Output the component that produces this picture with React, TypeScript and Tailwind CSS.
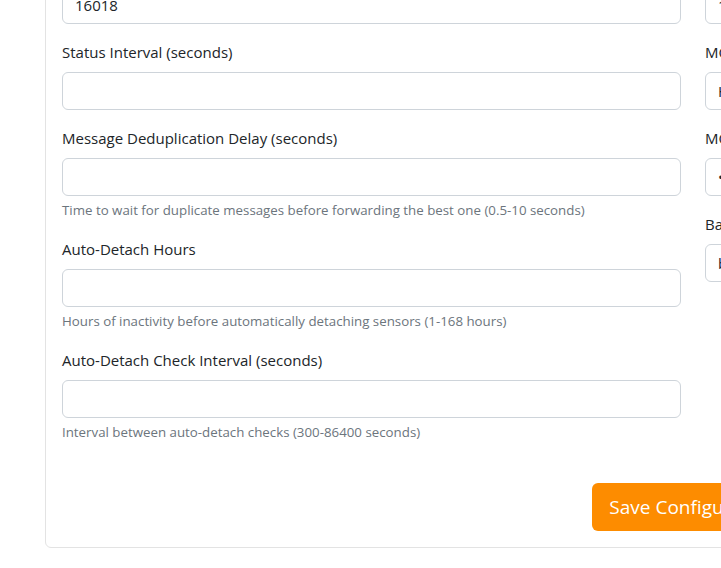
const left = [
  { label: "UDP Port", value: "16018" },
  { label: "Status Interval (seconds)", value: "" },
  {
    label: "Message Deduplication Delay (seconds)",
    value: "",
    help: "Time to wait for duplicate messages before forwarding the best one (0.5-10 seconds)",
  },
  {
    label: "Auto-Detach Hours",
    value: "",
    help: "Hours of inactivity before automatically detaching sensors (1-168 hours)",
  },
  {
    label: "Auto-Detach Check Interval (seconds)",
    value: "",
    help: "Interval between auto-detach checks (300-86400 seconds)",
  },
];

const right = [
  { label: "MQTT Port", value: "1883" },
  { label: "MQTT Username", value: "HAuser" },
  { label: "MQTT Password", value: "••••••••" },
  { label: "Base Topic", value: "bresser" },
];

type Field = { label: string; value: string; help?: string };

function FormField({ f }: { f: Field }) {
  return (
    <div className="mb-4">
      <label className="mb-2 block text-[15px] leading-6 text-[#212529]">{f.label}</label>
      <div className="flex h-[38px] items-center rounded-md border border-[#ced4da] bg-white px-3 text-[15px] text-[#212529]">
        {f.value}
      </div>
      {f.help && <div className="mt-1 text-[13.3px] leading-[21px] text-[#6c757d]">{f.help}</div>}
    </div>
  );
}

export default function App() {
  return (
    <div
      className="h-[568px] w-[721px] overflow-hidden bg-white"
      style={{ fontFamily: '"Open Sans", "Noto Sans", sans-serif' }}
    >
      <div className="-mt-[63px] pl-[45px]">
        <div className="w-[1296px] rounded-md border border-[#e3e3e3] bg-white p-4">
          <div className="grid grid-cols-2 gap-x-6">
            <div>
              {left.map((f) => (
                <FormField key={f.label} f={f} />
              ))}
            </div>
            <div>
              {right.map((f) => (
                <FormField key={f.label} f={f} />
              ))}
            </div>
          </div>
          <div className="mt-6 text-center">
            <button className="h-[48px] rounded-md bg-[#fd8c00] px-[17px] text-[19px] text-white">
              Save Configuration
            </button>
          </div>
        </div>
      </div>
    </div>
  );
}
